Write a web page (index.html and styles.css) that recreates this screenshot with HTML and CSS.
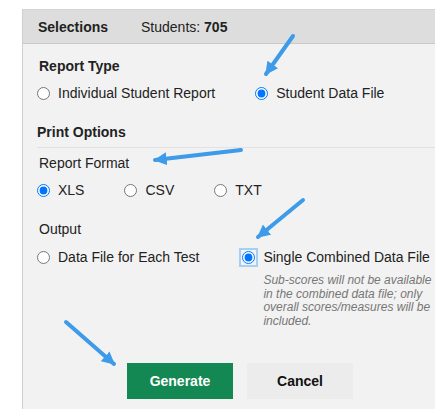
FILE: index.html
```html
<!DOCTYPE html>
<html lang="en">
<head>
<meta charset="utf-8">
<title>Print Selections</title>
<link rel="stylesheet" href="styles.css">
</head>
<body>
<div class="panel">
  <div class="panel-head">
    <span class="head-title">Selections</span>
    <span class="head-count">Students: <b>705</b></span>
  </div>
  <div class="panel-body">
    <div class="group-title">Report Type</div>
    <div class="opt-row opt-row-type">
      <label class="opt"><input type="radio" name="rtype"><span>Individual Student Report</span></label>
      <label class="opt"><input type="radio" name="rtype" checked><span>Student Data File</span></label>
    </div>

    <div class="section-title">Print Options</div>

    <div class="sub-title">Report Format</div>
    <div class="opt-row">
      <label class="opt"><input type="radio" name="fmt" checked><span>XLS</span></label>
      <label class="opt"><input type="radio" name="fmt"><span>CSV</span></label>
      <label class="opt"><input type="radio" name="fmt"><span>TXT</span></label>
    </div>

    <div class="sub-title sub-title-output">Output</div>
    <div class="opt-row opt-row-output">
      <label class="opt"><input type="radio" name="out"><span>Data File for Each Test</span></label>
      <div class="opt-col">
        <label class="opt"><input class="focused" type="radio" name="out" checked><span>Single Combined Data File</span></label>
        <p class="note">Sub-scores will not be available in the combined data file; only overall scores/measures will be included.</p>
      </div>
    </div>

    <div class="actions">
      <button class="btn btn-primary" type="button">Generate</button>
      <button class="btn btn-plain" type="button">Cancel</button>
    </div>
  </div>
</div>

<svg class="callouts" width="435" height="409" viewBox="0 0 435 409" aria-hidden="true">
  <defs>
    <marker id="head" viewBox="0 0 10 10" refX="9" refY="5" markerWidth="13" markerHeight="13" markerUnits="userSpaceOnUse" orient="auto">
      <path d="M0,0 L10,5 L0,10 z" fill="#3d9be9"/>
    </marker>
  </defs>
  <g stroke="#3d9be9" stroke-width="4" stroke-linecap="round" fill="none" marker-end="url(#head)">
    <line x1="293" y1="36" x2="266" y2="74"/>
    <line x1="241" y1="150" x2="155" y2="160"/>
    <line x1="303" y1="200" x2="258" y2="237"/>
    <line x1="66" y1="322" x2="114" y2="364"/>
  </g>
</svg>
</body>
</html>
```

FILE: styles.css
```css
html, body {
  margin: 0;
  padding: 0;
  background: #ffffff;
  overflow: hidden;
}

body {
  position: relative;
  width: 435px;
  height: 409px;
  font-family: "Liberation Sans", Arial, sans-serif;
  font-size: 14px;
  color: #222222;
}

/* panel runs off the right and bottom edges of the window */
.panel {
  margin: 9px 0 0 22px;
  width: 412px;
  height: 399px;
  background: #f2f2f2;
  border-left: 1px solid #cfcfcf;
  border-top: 1px solid #d4d4d4;
}

.panel-head {
  height: 33px;
  background: #dddddd;
  border-bottom: 1px solid #c9c9c9;
  display: flex;
  align-items: center;
  padding-left: 15px;
  gap: 33px;
  line-height: 16px;
}

.head-title {
  font-weight: bold;
}

.panel-body {
  padding: 14px 0 0 14px;
}

.group-title {
  font-weight: bold;
  line-height: 16px;
  padding-left: 2px;
}

.opt-row {
  display: flex;
  align-items: flex-start;
  gap: 40px;
  margin-top: 11px;
  line-height: 16px;
}

.opt {
  display: inline-flex;
  align-items: center;
  gap: 8px;
  white-space: nowrap;
}

.opt input {
  margin: 0;
  width: 13px;
  height: 13px;
}

.opt-col {
  display: flex;
  flex-direction: column;
  margin-left: 3px;
}

.opt input.focused {
  outline: 2px solid #a6cff4;
  outline-offset: 1px;
  border-radius: 0;
}

.note {
  margin: 9px 0 0 21px;
  width: 172px;
  font-size: 12px;
  line-height: 13.7px;
  font-style: italic;
  color: #777777;
}

.section-title {
  margin-top: 23px;
  font-weight: bold;
  line-height: 16px;
  padding-bottom: 7px;
  border-bottom: 1px solid #e2e2e2;
}

.sub-title {
  margin-top: 7px;
  padding-left: 2px;
  line-height: 16px;
}

.sub-title-output {
  margin-top: 23px;
}

.opt-row-output {
  margin-top: 12px;
}

.actions {
  display: flex;
  gap: 14px;
  margin: 34px 0 0 90px;
}

.btn {
  width: 106px;
  height: 36px;
  border: 0;
  font-family: "Liberation Sans", Arial, sans-serif;
  font-size: 14px;
  font-weight: bold;
  padding: 0;
}

.btn-primary {
  background: #148852;
  color: #ffffff;
}

.btn-plain {
  background: #ececec;
  color: #111111;
}

.callouts {
  position: absolute;
  left: 0;
  top: 0;
  pointer-events: none;
}
```
